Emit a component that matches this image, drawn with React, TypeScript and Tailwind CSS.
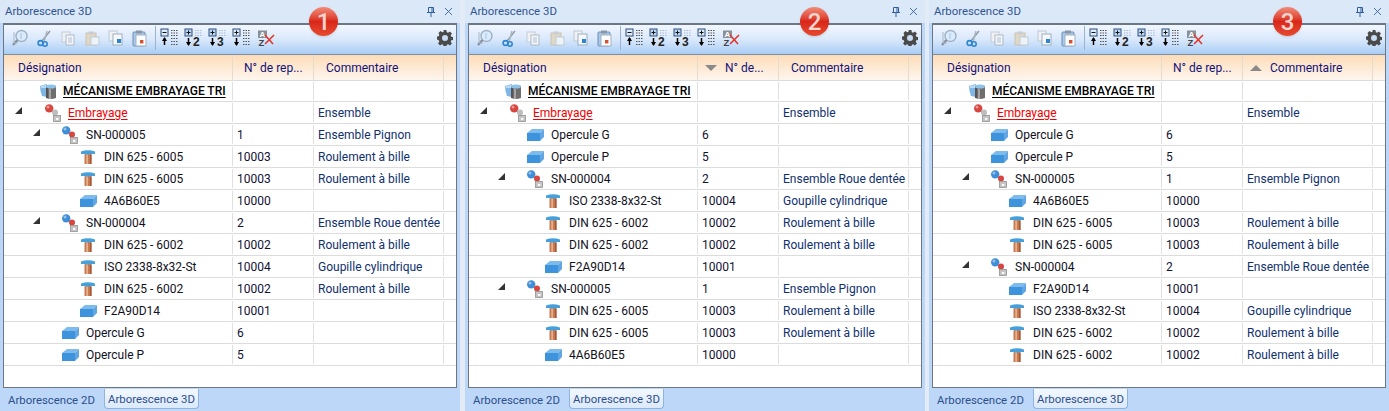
import { X } from "lucide-react";
import type { ReactNode } from "react";

type Kind = "root" | "assembly" | "sub" | "screw" | "block";

interface Row {
	readonly name: string;
	readonly kind: Kind;
	readonly num?: string;
	readonly comment?: string;
	readonly open?: boolean;
	readonly red?: boolean;
}

const din5 = { name: "DIN 625 - 6005", kind: "screw", num: "10003", comment: "Roulement à bille" } as const;
const din2 = { name: "DIN 625 - 6002", kind: "screw", num: "10002", comment: "Roulement à bille" } as const;
const iso = { name: "ISO 2338-8x32-St", kind: "screw", num: "10004", comment: "Goupille cylindrique" } as const;
const block5 = { name: "4A6B60E5", kind: "block", num: "10000" } as const;
const block4 = { name: "F2A90D14", kind: "block", num: "10001" } as const;
const sn5 = { name: "SN-000005", kind: "sub", num: "1", comment: "Ensemble Pignon", open: true } as const;
const sn4 = { name: "SN-000004", kind: "sub", num: "2", comment: "Ensemble Roue dentée", open: true } as const;
const opG = { name: "Opercule G", kind: "block", num: "6" } as const;
const opP = { name: "Opercule P", kind: "block", num: "5" } as const;

const head: Row[] = [
	{ name: "MÉCANISME EMBRAYAGE TRI", kind: "root" },
	{ name: "Embrayage", kind: "assembly", comment: "Ensemble", open: true, red: true },
];

const panels: { rows: Row[]; badge: string; badgeClass: string; sort?: "num" | "comment"; numLabel: string }[] = [
	{
		badge: "1",
		badgeClass: "left-[309px]",
		numLabel: "N° de rep...",
		rows: [...head, sn5, din5, din5, block5, sn4, din2, iso, din2, block4, opG, opP],
	},
	{
		badge: "2",
		badgeClass: "left-[335px]",
		numLabel: "N° de...",
		sort: "num",
		rows: [...head, opG, opP, sn4, iso, din2, din2, block4, sn5, din5, din5, block5],
	},
	{
		badge: "3",
		badgeClass: "left-[344px]",
		numLabel: "N° de rep...",
		sort: "comment",
		rows: [...head, opG, opP, sn5, block5, din5, din5, sn4, block4, iso, din2, din2],
	},
];

const RootIcon = () => (
	<svg width="18" height="18" viewBox="0 0 18 18">
		<path d="M1 4 L8 2 L8 15 L3 14 Q1 9 1 4Z" fill="#7fb6e6" />
		<path d="M2 4 L8 3 L8 6 L2 6Z" fill="#b9dcf6" />
		<path d="M7 4 Q12 2 17 4 V16 Q12 18 7 16Z" fill="#6e6e6e" />
		<ellipse cx="12" cy="4.5" rx="5" ry="2" fill="#8fc2ea" />
		<path d="M8 6 V16" stroke="#3d3d3d" />
		<path d="M11 7 V17" stroke="#a5a5a5" strokeWidth="2" />
	</svg>
);

const NodesIcon = ({ top }: { top: string }) => (
	<svg width="16" height="18" viewBox="0 0 16 18">
		<path d="M4 5 L11 10 V15" stroke="#9a9a9a" strokeWidth="1.5" fill="none" />
		<circle cx="4.2" cy="4.4" r="4.2" fill={top} />
		<circle cx="3" cy="3" r="1.5" fill="#ffffff" opacity="0.45" />
		<circle cx="10" cy="8.5" r="3" fill={top === "#d8473f" ? "#bdbdbd" : "#d8473f"} />
		<rect x="8.5" y="11.5" width="7" height="6" fill="#c4c4c4" stroke="#929292" strokeWidth="0.8" />
		<rect x="11" y="14" width="2.4" height="1.8" fill="#ffffff" />
	</svg>
);

const ScrewIcon = () => (
	<svg width="14" height="14" viewBox="0 0 14 14">
		<path d="M0 1.5 Q7 -1 14 1.5 V4 H10.5 L9.5 5 H4.5 L3.5 4 H0Z" fill="#45a0dc" />
		<rect x="3.5" y="4.5" width="7" height="9.5" fill="#c9794e" />
		<rect x="5.5" y="4.5" width="1.2" height="9.5" fill="#f0c9ac" />
		<rect x="9" y="4.5" width="1.5" height="9.5" fill="#a4583a" />
	</svg>
);

const BlockIcon = () => (
	<svg width="17" height="12" viewBox="0 0 17 12">
		<path d="M0 4 L5 0 H17 L13 4Z" fill="#7dbbec" />
		<path d="M0 4 H13 V12 H0Z" fill="#3d94dc" />
		<path d="M13 4 L17 0 V8 L13 12Z" fill="#5fa6e2" />
	</svg>
);

const rowIndent: Record<Kind, string> = {
	root: "pl-[35px]",
	assembly: "pl-[41px]",
	sub: "pl-[58px]",
	screw: "pl-[77px]",
	block: "pl-[76px]",
};

const NodeIcon = ({ row }: { row: Row }) => {
	if (row.kind === "root") return <RootIcon />;
	if (row.kind === "assembly") return <NodesIcon top="#d8473f" />;
	if (row.kind === "sub") return <NodesIcon top="#3f8fd8" />;
	if (row.kind === "screw") return <ScrewIcon />;
	return <BlockIcon />;
};

const rowGap: Record<Kind, string> = {
	root: "gap-[6px]",
	assembly: "gap-[7px]",
	sub: "gap-[8px]",
	screw: "gap-[9px]",
	block: "gap-[7px]",
};

const TreeRow = ({ row, shallow }: { row: Row; shallow: boolean }) => {
	const indent = shallow ? "pl-[58px]" : rowIndent[row.kind];
	return (
		<div
			className={`grid grid-cols-[229px_81px_130px_1fr] border-b border-[#dcdcdc] ${row.kind === "root" ? "h-[21px]" : "h-[22px]"}`}
		>
			<div className={`relative my-px flex items-center overflow-hidden whitespace-nowrap border-r border-[#e0e0e0] ${indent} ${rowGap[row.kind]}`}>
				{row.open && (
					<span
						className={`absolute top-[4px] h-0 w-0 border-b-[7px] border-l-[7px] border-b-[#333333] border-l-transparent ${row.kind === "assembly" ? "left-[11px]" : "left-[29px]"}`}
					/>
				)}
				<NodeIcon row={row} />
				<span
					className={
						row.kind === "root"
							? "font-medium text-black underline underline-offset-2"
							: row.red
								? "text-[#f00000] underline underline-offset-2"
								: "text-[#111122]"
					}
				>
					{row.name}
				</span>
			</div>
			<div className="my-px flex items-center border-r border-[#e0e0e0] pl-[4px] text-[#111133]">{row.num}</div>
			<div className="my-px flex items-center overflow-hidden whitespace-nowrap border-r border-[#e0e0e0] pl-[4px] text-[#10306e]">
				{row.comment}
			</div>
			<div />
		</div>
	);
};

const Tool = ({ children, className }: { children: ReactNode; className?: string }) => (
	<span className={`flex h-[18px] w-[24px] items-center justify-center ${className ?? ""}`}>{children}</span>
);

const TreeGlyph = ({ sign, label, faded }: { sign: "+" | "-"; label?: string; faded?: boolean }) => (
	<svg width="20" height="20" viewBox="0 0 20 20">
		<rect x="1" y="1" width="7" height="7" fill={faded ? "#bcd6f2" : "#dfeaf8"} stroke="#2f4f7f" />
		<path d={sign === "+" ? "M2.5 4.5 H6.5 M4.5 2.5 V6.5" : "M2.5 4.5 H6.5"} stroke="#111111" />
		<path d="M4.5 10 V17" stroke="#000000" strokeWidth="1.5" />
		{sign === "-" ? <path d="M2 13 L4.5 9 L7 13Z" fill="#000000" /> : <path d="M2 14 L4.5 18 L7 14Z" fill="#000000" />}
		{label ? (
			<text x="9" y="18" fontSize="12" fontWeight="700" fontFamily="'Liberation Sans', sans-serif" fill="#222222">
				{label}
			</text>
		) : (
			<path d="M11 10.5 H18 M11 13.5 H18 M11 16.5 H18" stroke="#555555" strokeDasharray="1.5 1" />
		)}
		<path d="M11 2.5 H18 M11 5 H18 M11 7.5 H18" stroke={label ? "#a9bdd4" : "#555555"} strokeDasharray="1.5 1" />
	</svg>
);

const Toolbar = () => (
	<div className="flex h-[30px] shrink-0 items-center border-b border-[#7d8ea3] bg-gradient-to-b from-[#f2f7fe] via-[#d9e8fb] to-[#a9cdf5] pb-[3px] pl-[4px] pr-[3px]">
		<Tool>
			<svg width="18" height="18" viewBox="0 0 18 18" fill="none">
				<circle cx="10.5" cy="7" r="5.5" fill="#dcebfa" stroke="#9fb3c8" strokeWidth="1.4" />
				<path d="M6.5 11 L2 16" stroke="#8a8f96" strokeWidth="2.4" />
				<path d="M3 3 V14 H7" stroke="#a9b9cc" />
				<path d="M10 4 V10" stroke="#9fc3e8" />
			</svg>
		</Tool>
		<Tool>
			<svg width="16" height="17" viewBox="0 0 16 17" fill="none">
				<path d="M14 1 L6 11" stroke="#8f9aa5" strokeWidth="1.4" />
				<path d="M11 1 L8 12" stroke="#a9b4bf" strokeWidth="1.4" />
				<circle cx="4.5" cy="13" r="2.4" stroke="#2f86d2" strokeWidth="1.6" />
				<circle cx="9" cy="14" r="2.2" stroke="#2f86d2" strokeWidth="1.6" />
			</svg>
		</Tool>
		<Tool>
			<svg width="15" height="15" viewBox="0 0 15 15">
				<rect x="1" y="1" width="8" height="10" fill="#eef1f5" stroke="#c5ccd4" />
				<rect x="5" y="4" width="8" height="10" fill="#f4f6f9" stroke="#aeb9c6" />
				<path d="M7 7 H11 M7 9 H11 M7 11 H11" stroke="#b0bfd0" />
			</svg>
		</Tool>
		<Tool>
			<svg width="15" height="15" viewBox="0 0 15 15">
				<rect x="1" y="2" width="10" height="12" fill="#dfd8c6" stroke="#c9c3b4" />
				<rect x="3.5" y="0.5" width="5" height="3" fill="#c9ccd0" />
				<rect x="6" y="6" width="8" height="8" fill="#eef3f9" stroke="#c1cbd6" />
			</svg>
		</Tool>
		<Tool>
			<svg width="16" height="16" viewBox="0 0 16 16">
				<rect x="1" y="1" width="8" height="10" fill="#eef1f5" stroke="#c0c8d2" />
				<rect x="5" y="4" width="9" height="11" fill="#f6f8fb" stroke="#9fadbd" />
				<rect x="9" y="9" width="4" height="4" fill="#2a86d0" />
			</svg>
		</Tool>
		<Tool>
			<svg width="16" height="17" viewBox="0 0 16 17">
				<rect x="1" y="2" width="12" height="14" rx="1" fill="#a9c9ec" stroke="#6f8fb5" />
				<rect x="4" y="0.5" width="6" height="3" fill="#8b97a5" />
				<rect x="4" y="5" width="10" height="11" fill="#fbfcfe" stroke="#a7b3c0" />
				<rect x="8" y="10" width="3.4" height="3.4" fill="#d8502f" />
			</svg>
		</Tool>
		<span className="mx-[3px] h-[24px] w-px bg-[#9db3cc]" />
		<Tool className="ml-[-1px]">
			<TreeGlyph sign="-" />
		</Tool>
		<Tool>
			<TreeGlyph sign="+" label="2" faded />
		</Tool>
		<Tool>
			<TreeGlyph sign="+" label="3" faded />
		</Tool>
		<Tool>
			<TreeGlyph sign="+" />
		</Tool>
		<Tool>
			<svg width="18" height="17" viewBox="0 0 18 17">
				<rect x="1" y="0.5" width="9" height="7.5" fill="#8a8f96" />
				<text x="2.5" y="7" fontSize="8" fontWeight="700" fontFamily="'Liberation Sans', sans-serif" fill="#ffffff">
					A
				</text>
				<text x="1.5" y="16" fontSize="9.5" fontWeight="700" fontFamily="'Liberation Sans', sans-serif" fill="#444444">
					Z
				</text>
				<path d="M8 14 L17 5 M8 5 L16 14" stroke="#e2382c" strokeWidth="1.6" />
			</svg>
		</Tool>
		<span className="flex-1" />
		<svg width="16" height="16" viewBox="0 0 16 16">
			<path
				d="M6.6 0.5h2.8l.4 2.1 1.3.6 1.8-1.2 2 2-1.2 1.8.6 1.3 2.1.4v2.8l-2.1.4-.6 1.3 1.2 1.8-2 2-1.8-1.2-1.3.6-.4 2.1H6.6l-.4-2.1-1.3-.6-1.8 1.2-2-2 1.2-1.8-.6-1.3L-.4 9.8V7l2.1-.4.6-1.3L1.5 3.5l2-2 1.8 1.2 1.3-.6z"
				fill="#4a4a4a"
				transform="translate(0 -0.4)"
			/>
			<circle cx="8" cy="8" r="3" fill="#c9def6" />
		</svg>
	</div>
);

const HeaderCell = ({ children, className }: { children: ReactNode; className?: string }) => (
	<div className={`flex items-center whitespace-nowrap border-r border-[#e6dccb] ${className ?? ""}`}>{children}</div>
);

const SortUp = () => <span className="h-0 w-0 border-x-[6px] border-b-[6px] border-x-transparent border-b-[#8a8a8a]" />;
const SortDown = () => <span className="h-0 w-0 border-x-[6px] border-t-[6px] border-x-transparent border-t-[#8a8a8a]" />;

const Panel = ({ panel }: { panel: (typeof panels)[number] }) => (
	<section className="relative flex h-full w-[460px] shrink-0 flex-col bg-[#bdd7f8] text-[12px]">
		<div className="flex h-[23px] shrink-0 items-center justify-between bg-[#dbe8f8] pl-[5px] pr-[5px] text-[11.4px] text-[#2f5590]">
			<span>Arborescence 3D</span>
			<span className="flex items-center gap-[7px] text-[#2f5f9e]">
				<svg width="8" height="10" viewBox="0 0 8 10" fill="none" stroke="currentColor">
					<path d="M1.5 0.5 H6.5 V5.5 H1.5Z M0 5.5 H8 M4 6 V10 M5 1 V5" />
				</svg>
				<X size={13} strokeWidth={1.6} />
			</span>
		</div>
		<div className="mx-[3px] flex h-[365px] shrink-0 flex-col border border-t-2 border-[#6c7785] bg-white">
			<Toolbar />
			<div className="grid h-[26px] shrink-0 grid-cols-[229px_81px_130px_1fr] border-b border-[#dcdcdc] bg-gradient-to-b from-[#fddcb8] to-[#fef6ee] text-[#12127a]">
				<HeaderCell className="pl-[14px]">Désignation</HeaderCell>
				<HeaderCell className={panel.sort === "num" ? "gap-[8px] pl-[7px]" : "pl-[11px]"}>
					{panel.sort === "num" && <SortDown />}
					{panel.numLabel}
				</HeaderCell>
				<HeaderCell className={panel.sort === "comment" ? "gap-[8px] pl-[7px]" : "pl-[12px]"}>
					{panel.sort === "comment" && <SortUp />}
					Commentaire
				</HeaderCell>
				<div />
			</div>
			<div>
				{panel.rows.map((row, i) => (
					<TreeRow key={`${row.name}-${i}`} row={row} shallow={row.name.startsWith("Opercule")} />
				))}
			</div>
		</div>
		<div className="flex flex-1 items-start text-[11.4px] text-[#2c4f8c]">
			<span className="w-[104px] pl-[8px] pt-[5px] leading-[15px]">Arborescence 2D</span>
			<span className="mt-[1px] h-[20px] w-[95px] rounded-b-[4px] border border-t-0 border-[#8fb4e0] bg-gradient-to-b from-[#f3f8fe] to-[#dbe9fa] pl-[3px] pt-[3px] leading-[15px]">
				Arborescence 3D
			</span>
		</div>
		<div
			className={`absolute top-[7px] flex h-[29px] w-[29px] items-center justify-center rounded-full bg-gradient-to-b from-[#f08a78] via-[#d9261a] to-[#e64a30] text-[24px] font-medium leading-none text-[#f6d5cd] shadow-sm ${panel.badgeClass}`}
		>
			{panel.badge}
		</div>
	</section>
);

export default function App() {
	return (
		<div className="flex h-[411px] w-[1389px] gap-[5px] overflow-hidden bg-[#e3ecf6] font-['Roboto',sans-serif] [&>section:last-child]:ml-[-1px]">
			{panels.map((panel) => (
				<Panel key={panel.badge} panel={panel} />
			))}
		</div>
	);
}
